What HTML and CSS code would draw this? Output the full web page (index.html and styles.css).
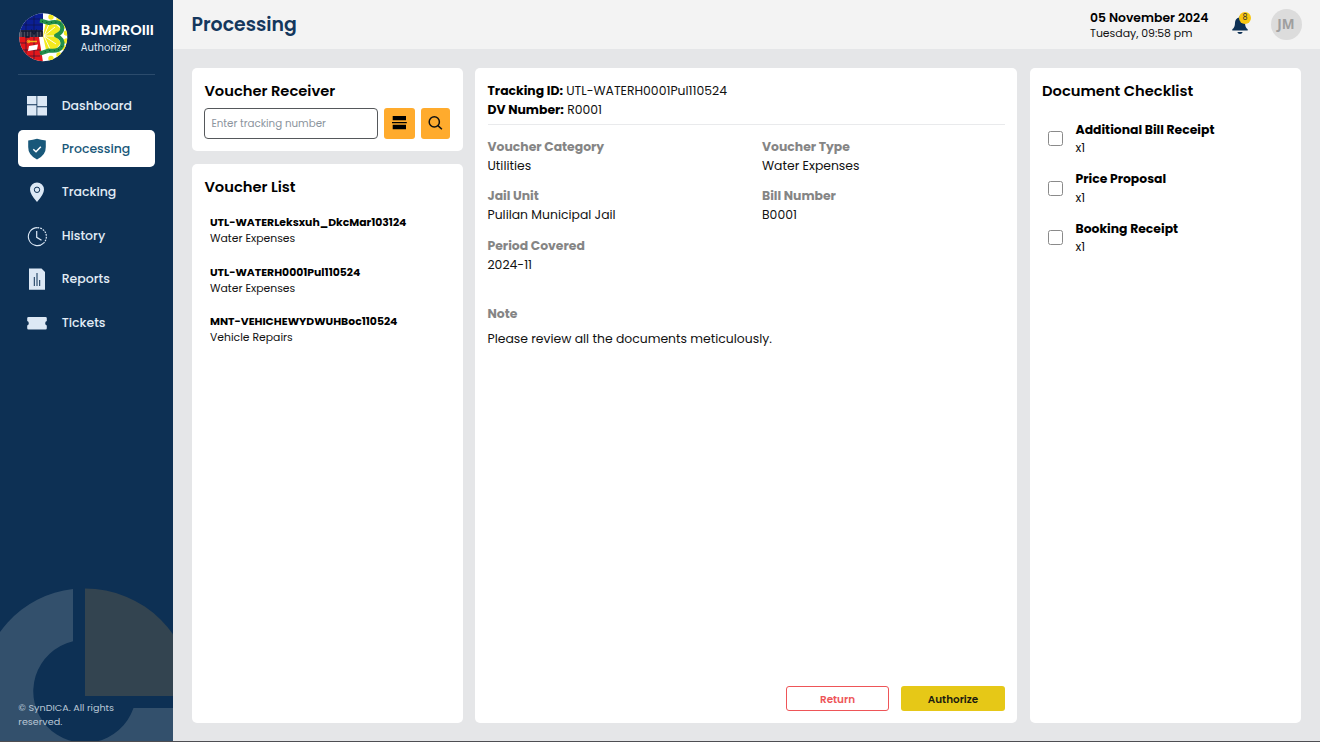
FILE: index.html
```html
<!DOCTYPE html>
<html lang="en">
<head>
<meta charset="utf-8">
<title>Processing</title>
<link rel="stylesheet" href="styles.css">
</head>
<body>
<div class="app">
  <aside class="sidebar">
    <svg class="sidebar-art" width="173" height="153" viewBox="0 588 173 153">
      <path fill="#33506c" d="M73 589A102.600 102.600 0 0 0 -18.600 691A102.600 102.600 0 0 0 84 793.600A102.600 102.600 0 0 0 185 708H133.500A51.500 51.500 0 1 1 73 641.200Z"/>
      <path fill="#334450" d="M85 588.500A107.500 107.500 0 0 1 192.500 696H85Z"/>
    </svg>
    <div class="brand">
      <svg class="brand-logo" width="50" height="50" viewBox="0 0 50 50">
        <defs><clipPath id="seal"><circle cx="25.300" cy="25.300" r="24"/></clipPath></defs>
        <g clip-path="url(#seal)">
          <path fill="#fff" d="M0 0h50v50H0z"/>
          <path fill="#0b1f94" d="M0 0h25v19H0z"/>
          <path fill="#e3171b" d="M0 25h21l4 25H0z"/>
          <path fill="#474a5c" d="M0 18h25v7H0z"/>
          <path stroke="#10143a" stroke-width=".6" fill="none" d="M8 0v50M16 0v50M0 7h25M0 13h25M0 31h8M0 38h22M0 44h22"/>
          <g fill="#f3ea1f"><circle cx="33" cy="5" r="2.700"/><circle cx="41" cy="7.500" r="2.700"/><circle cx="47" cy="14" r="2.700"/><circle cx="48.500" cy="21" r="2.700"/><circle cx="48.500" cy="29" r="2.700"/><circle cx="46.500" cy="36" r="2.700"/><circle cx="41" cy="43" r="2.700"/><circle cx="33" cy="46.500" r="2.700"/></g>
          <path fill="#f3ea1f" d="M25 24L27.500 12L38 12.500L43 17L38 24L43 31L38 37L28 38Z"/>
          <path stroke="#fff" stroke-width=".9" d="M26 24L31 12M26 24L37 15M26 24h12M26 24L38 32M26 24L32 37"/>
          <path fill="none" stroke="#23904b" stroke-width="4" stroke-linejoin="round" d="M22 8.500L31 11Q40 8.500 43.500 13Q46.500 20 38 23.500Q46.500 27 44 34Q41 40 31 38.500L22 41.500"/>
          <path fill="none" stroke="#0d4a2a" stroke-width="1" stroke-dasharray="1 3.500" d="M24 9.300L31 11Q40 8.500 43.500 13M44 34Q41 40 31 38.500L22 41.500"/>
          <path fill="none" stroke="#111831" stroke-width="1.300" d="M3 19h21M5 19v6M8 19v6h3v-6M14 25v-6l2 3 2-3v6M21 25v-6M24 19v5"/>
          <path fill="#fff" d="M11 34l9-1.500-1 5-9 1.500z"/>
          <path stroke="#f2b51f" stroke-width="1.300" d="M10 29.500h9"/>
          <circle cx="10.500" cy="29.500" r="1.300" fill="none" stroke="#f2b51f"/>
        </g>
      </svg>
      <div class="brand-text">
        <div class="brand-name">BJMPROIII</div>
        <div class="brand-role">Authorizer</div>
      </div>
    </div>
    <nav class="nav">
      <a class="nav-item">
        <svg class="nav-icon" width="20" height="22" viewBox="0 0 20 22"><path fill="#dce8f5" d="M0 1h9.500v8.300H0zM0 10.200h9.500V20.500H0zM10.300 1H20v10.300h-9.700zM10.300 12.200H20v8.300h-9.700z"/></svg>
        <span>Dashboard</span>
      </a>
      <a class="nav-item nav-item-active">
        <svg class="nav-icon" width="20" height="22" viewBox="0 0 20 22"><path fill="#19587a" d="M10 .8Q14 2 18.800 2.400V9Q19 17 10 21.500Q1 17 1.200 9V2.400Q6 2 10 .8Z"/><path fill="none" stroke="#fff" stroke-width="1.500" d="M6.300 11.200l2.700 2.500 4.800-5"/></svg>
        <span>Processing</span>
      </a>
      <a class="nav-item">
        <svg class="nav-icon" width="20" height="22" viewBox="0 0 20 22"><path fill="#dce8f5" d="M10 1.400A7 7 0 0 0 3 8.400Q3 13 10 20.900Q17 13 17 8.400A7 7 0 0 0 10 1.400Z"/><circle cx="10" cy="8.800" r="2.700" fill="none" stroke="#0d3054" stroke-width="1"/></svg>
        <span>Tracking</span>
      </a>
      <a class="nav-item">
        <svg class="nav-icon" width="20" height="22" viewBox="0 0 20 22"><g fill="none" stroke="#dce8f5"><path d="M10.500 2.600A9 9 0 1 0 16.600 18.100" stroke-width="1.100"/><path d="M10.500 2.600A9 9 0 0 1 16.600 18.100" stroke-width="1.200" stroke-dasharray="1.800 1"/><path d="M9.700 6.100V12.300l4.800 2.900" stroke-width="1.200"/></g></svg>
        <span>History</span>
      </a>
      <a class="nav-item">
        <svg class="nav-icon" width="20" height="22" viewBox="0 0 20 22"><path fill="#dce8f5" d="M2 .5h12.500L18 4v17.700H2z"/><path stroke="#0d3054" stroke-width="1" d="M7.300 9v9M10 5V18M12.700 12V18"/></svg>
        <span>Reports</span>
      </a>
      <a class="nav-item">
        <svg class="nav-icon" width="20" height="22" viewBox="0 0 20 22"><path fill="#dce8f5" d="M1.500 5h17q1.300 0 1.300 1.300V9q-1.600.4-1.600 2.200t1.600 2.200v2.800q0 1.300-1.300 1.300h-17Q.2 17.500.2 16.200v-2.800q1.600-.4 1.600-2.200T.2 9V6.300Q.2 5 1.500 5z"/></svg>
        <span>Tickets</span>
      </a>
    </nav>
    <div class="copyright">© SynDICA. All rights<br>reserved.</div>
  </aside>

  <div class="main">
    <header class="topbar">
      <h1 class="page-title">Processing</h1>
      <div class="topbar-right">
        <div class="clock">
          <div class="clock-date">05 November 2024</div>
          <div class="clock-time">Tuesday, 09:58 pm</div>
        </div>
        <div class="bell">
          <svg width="16" height="20" viewBox="0 0 16 20"><path fill="#0d3054" d="M8 1.200q1 0 1 1.300 4 1 4 5.500 0 4.300 2.700 6.300v1.300H.3v-1.300Q3 12.300 3 8q0-4.500 4-5.500Q7 1.200 8 1.200zM5.300 17h5.400q-.6 2-2.700 2t-2.700-2z"/></svg>
          <span class="bell-badge">8</span>
        </div>
        <div class="avatar">JM</div>
      </div>
    </header>

    <div class="content">
      <div class="column">
        <section class="card receiver">
          <h2 class="card-title">Voucher Receiver</h2>
          <div class="search-row">
            <input class="search-input" placeholder="Enter tracking number">
            <button class="icon-button button-scan"><svg width="16" height="16" viewBox="0 0 16 16"><path d="M.7 1H14v4.300H.7zM0 6.900h14.800v1.400H0zM.7 9.800H14v4.500H.7z"/></svg></button>
            <button class="icon-button button-search"><svg width="16" height="16" viewBox="0 0 16 16"><g fill="none" stroke="#111" stroke-width="1.500"><circle cx="7.300" cy="6.900" r="5.100"/><path d="M10.900 10.600l4 3.700"/></g></svg></button>
          </div>
        </section>
        <section class="card voucher-list">
          <h2 class="card-title">Voucher List</h2>
          <ul class="vouchers">
            <li class="voucher"><b>UTL-WATERLeksxuh_DkcMar103124</b><span>Water Expenses</span></li>
            <li class="voucher"><b>UTL-WATERH0001Pul110524</b><span>Water Expenses</span></li>
            <li class="voucher"><b>MNT-VEHICHEWYDWUHBoc110524</b><span>Vehicle Repairs</span></li>
          </ul>
        </section>
      </div>

      <section class="card details">
        <div class="details-head">
          <div><b>Tracking ID:</b> UTL-WATERH0001Pul110524</div>
          <div><b>DV Number:</b> R0001</div>
        </div>
        <dl class="fields">
          <div><dt>Voucher Category</dt><dd>Utilities</dd></div>
          <div><dt>Voucher Type</dt><dd>Water Expenses</dd></div>
          <div><dt>Jail Unit</dt><dd>Pulilan Municipal Jail</dd></div>
          <div><dt>Bill Number</dt><dd>B0001</dd></div>
          <div><dt>Period Covered</dt><dd>2024-11</dd></div>
        </dl>
        <div class="note-label">Note</div>
        <p class="note">Please review all the documents meticulously.</p>
        <div class="actions">
          <button class="button button-return">Return</button>
          <button class="button button-authorize">Authorize</button>
        </div>
      </section>

      <section class="card checklist">
        <h2 class="card-title">Document Checklist</h2>
        <ul class="documents">
          <li class="document"><span class="checkbox"></span><div><b>Additional Bill Receipt</b><span>x1</span></div></li>
          <li class="document"><span class="checkbox"></span><div><b>Price Proposal</b><span>x1</span></div></li>
          <li class="document"><span class="checkbox"></span><div><b>Booking Receipt</b><span>x1</span></div></li>
        </ul>
      </section>
    </div>
  </div>
</div>
</body>
</html>
```
FILE: styles.css
```css
* { box-sizing: border-box; }
body, h1, h2, ul, dl, dd, p { margin: 0; padding: 0; }
body, input, button { font-family: Poppins, Inter, sans-serif; }
body { font-size: 12.4px; color: #111; background: #4e4e52; white-space: nowrap; }
ul { list-style: none; }
b { font-weight: 700; color: #000; }
svg { display: block; flex: none; }

.app { display: flex; height: 741px; width: 1320px; overflow: hidden; }

.sidebar { position: relative; display: flex; flex-direction: column; width: 173px; flex: none; padding: 12px 18.5px 11.5px 18.3px; background: #0d3054; color: #e2ecf6; overflow: hidden; }
.sidebar-art { position: absolute; left: 0; bottom: 0; }
.brand { display: flex; align-items: center; height: 62.5px; padding-bottom: 12.5px; border-bottom: 1px solid #2b4b6c; }
.brand-logo { margin-right: 12.5px; }
.brand-text { padding-top: 4px; }
.brand-name { font-size: 14.7px; line-height: 18px; font-weight: 600; color: #fff; }
.brand-role { font-size: 10px; line-height: 17px; }
.nav { display: flex; flex-direction: column; gap: 6.4px; margin-top: 12.6px; }
.nav-item { display: flex; align-items: center; gap: 14.7px; height: 37px; padding-left: 8.7px; border-radius: 5px; font-size: 12.5px; font-weight: 500; }
.nav-item-active { background: #fff; color: #19587a; }
.copyright { position: relative; margin-top: auto; font-size: 9.6px; line-height: 14.5px; color: #b9c7d5; }

.main { display: flex; flex-direction: column; flex: 1; background: #e5e6e8; }
.topbar { display: flex; align-items: center; justify-content: space-between; height: 49px; padding: 0 18.5px; background: #f3f3f3; }
.page-title { font-size: 18.9px; font-weight: 600; color: #14375d; }
.topbar-right { display: flex; align-items: center; }
.clock { width: 142px; padding-top: 1px; }
.clock-date { font-size: 12.4px; line-height: 17px; font-weight: 600; color: #000; }
.clock-time { font-size: 10.9px; line-height: 16px; }
.bell { position: relative; margin-right: 22.5px; }
.bell-badge { position: absolute; left: 7px; top: -3px; width: 12px; height: 12px; border-radius: 50%; background: #f8c712; color: #333; font-size: 8px; line-height: 12.5px; text-align: center; }
.avatar { width: 31px; height: 31px; border-radius: 50%; background: #dcdcdc; color: #9f9f9f; font: 700 13.6px/30px "Noto Sans", sans-serif; text-align: center; }

.content { display: grid; grid-template-columns: 270.5px 542px 271px; gap: 12.5px; flex: 1; padding: 19px 19px 18px; }
.column { display: flex; flex-direction: column; gap: 13px; }
.card { background: #fff; border-radius: 5px; }
.card-title { font-size: 14.7px; line-height: 20px; font-weight: 600; color: #000; }
.receiver { height: 83px; padding: 13px 12.4px; }
.search-row { display: flex; align-items: center; margin-top: 6.5px; }
.search-input { width: 174px; height: 31px; padding: 2px 6px 0; border: 1.5px solid #55585b; border-radius: 4px; font-size: 10.3px; background: #fff; }
.search-input::placeholder { color: #8b949d; }
.icon-button { display: flex; align-items: center; justify-content: center; height: 31px; padding: 0; border: 0; border-radius: 3px; background: #ffab2d; }
.button-scan { width: 30.5px; margin-left: 6px; }
.button-search { width: 29.5px; margin-left: 6px; }
.voucher-list { flex: 1; padding: 12.5px 12.4px; }
.vouchers { display: grid; gap: 17.5px; padding: 18.6px 5.6px 0; }
.voucher { display: grid; grid-template-rows: 16px 16px; line-height: 16px; font-size: 10.83px; }

.details { display: flex; flex-direction: column; padding: 12.5px; }
.details-head { height: 44px; line-height: 19px; border-bottom: 1px solid #e9eaec; }
.fields { display: grid; grid-template-columns: 274.5px 1fr; row-gap: 12.3px; margin-top: 13.2px; line-height: 18.6px; }
.fields dd { padding-top: .4px; margin-bottom: -.4px; }
.fields dt, .note-label { font-weight: 700; color: #858585; }
.note-label { margin-top: 30.8px; line-height: 18.5px; }
.note { margin-top: 6.5px; line-height: 18.5px; }
.actions { display: flex; justify-content: flex-end; gap: 12px; margin-top: auto; }
.button { height: 25px; border-radius: 3px; font-size: 10.4px; font-weight: 600; padding: 3px 0 0 1px; }
.button-return { width: 103px; border: 1.5px solid #ee5558; background: #fff; color: #ee5558; }
.button-authorize { width: 104px; border: 0; background: #e6c817; color: #1c1c10; }

.checklist { padding: 13px 12.5px; }
.documents { display: grid; gap: 12.5px; margin-top: 19px; padding-left: 5.5px; }
.document { display: flex; align-items: center; gap: 13px; height: 37px; line-height: 18.5px; }
.document div { padding-top: 1.8px; }
.document b { display: block; }
.document div span { font-size: 12px; }
.checkbox { width: 15px; height: 15px; border: 1px solid #8a8a8a; border-radius: 2.5px; }
```
